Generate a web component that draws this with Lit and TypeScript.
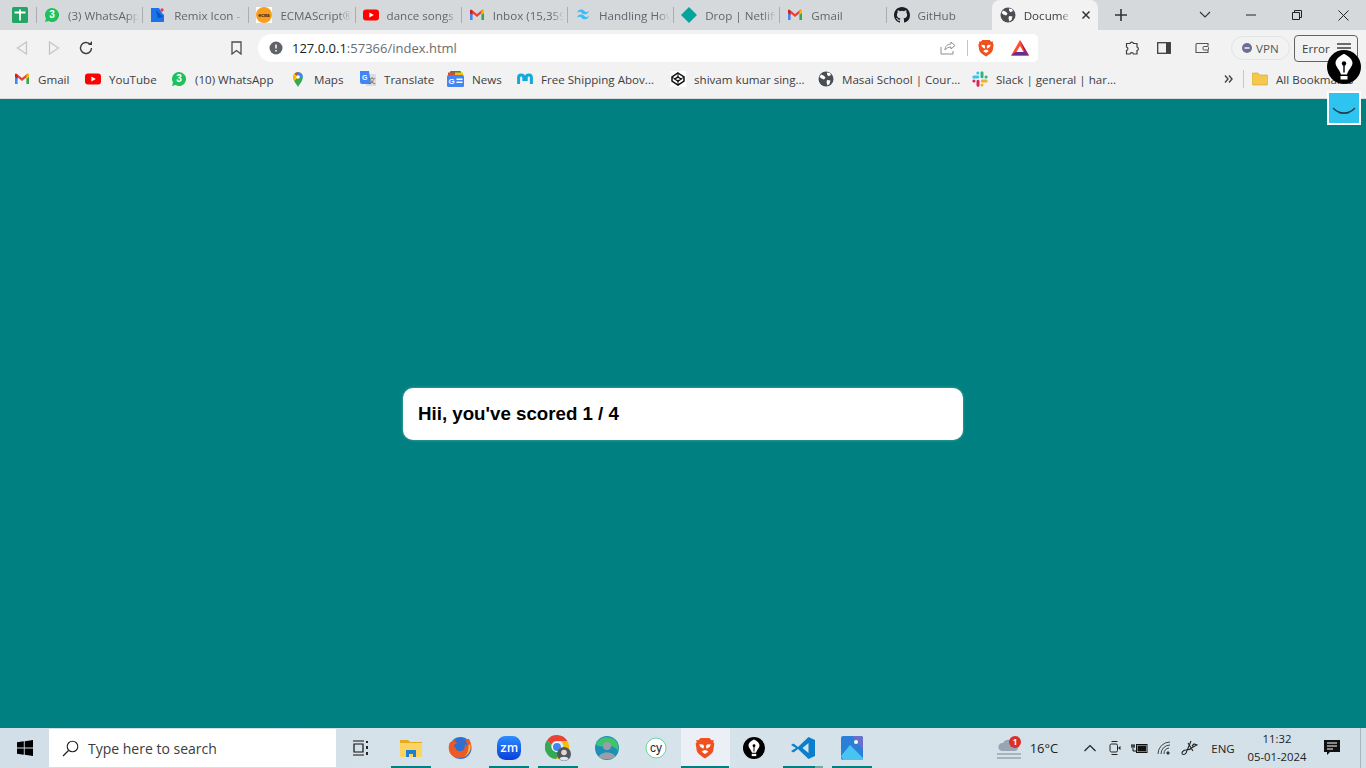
import { LitElement, html, css } from "lit";
import { customElement } from "lit/decorators.js";

// iconos de favicon
const gmail = (s = 16) => html`<svg width=${s} height=${s} viewBox="0 0 16 16">
  <path d="M1 4v9h2.600V7z" fill="#4285f4"/><path d="M15 4v9h-2.600V7z" fill="#34a853"/>
  <path d="M1 4.200 2.400 2.600 8 7l5.600-4.400L15 4.200 8 10z" fill="#ea4335"/>
  <path d="M12.400 4 15 2.600V6l-2.600 2z" fill="#fbbc04"/><path d="M3.600 4 1 2.600V6l2.600 2z" fill="#c5221f"/>
</svg>`;
const youtube = html`<svg width="16" height="16" viewBox="0 0 16 16"><rect y="2.500" width="16" height="11" rx="3" fill="#f00"/><path d="M6.400 5.500 10.800 8l-4.400 2.500z" fill="#fff"/></svg>`;
const whatsapp = html`<svg width="16" height="16" viewBox="0 0 16 16">
  <path d="M8 1a7 7 0 1 1-3.400 13.100L1 15l1-3.400A7 7 0 0 1 8 1z" fill="#1fc15c"/>
  <text x="8" y="11.400" font-size="10" font-weight="700" text-anchor="middle" fill="#fff" font-family="Liberation Sans">3</text>
</svg>`;
const remix = html`<svg width="16" height="16" viewBox="0 0 16 16"><path d="M1 1h8l3 5 2 2v7H1z" fill="#1a73e8"/><path d="M6 3l7 7-5 1z" fill="#0b4fc4"/><circle cx="12" cy="3" r="1.700" fill="#f0386b"/></svg>`;
const ecma = html`<svg width="16" height="16" viewBox="0 0 16 16"><rect width="16" height="16" fill="#fff"/><circle cx="8" cy="8" r="8" fill="#f99d1c"/><text x="8" y="10" font-size="4.800" font-weight="700" text-anchor="middle" fill="#222" font-family="Liberation Mono">ecma</text></svg>`;
const tailwind = html`<svg width="16" height="16" viewBox="0 0 16 16"><path d="M4 7c.6-2.400 2-3.500 4-3.500 3 0 3.400 2.200 5 2.600 1 .2 2-.2 3-1.300-.6 2.400-2 3.500-4 3.500-3 0-3.400-2.200-5-2.600-1-.2-2 .2-3 1.300z" fill="#38bdf8" transform="translate(-2 -1)"/><path d="M4 7c.6-2.400 2-3.500 4-3.500 3 0 3.400 2.200 5 2.600 1 .2 2-.2 3-1.300-.6 2.400-2 3.500-4 3.500-3 0-3.400-2.200-5-2.600-1-.2-2 .2-3 1.300z" fill="#38bdf8" transform="translate(-2 4)"/></svg>`;
const netlify = html`<svg width="16" height="16" viewBox="0 0 16 16"><path d="M8 0l8 8-8 8-8-8z" fill="#05a59d"/></svg>`;
const github = html`<svg width="16" height="16" viewBox="0 0 16 16"><path fill="#1b1f23" d="M8 0C3.580 0 0 3.580 0 8c0 3.540 2.290 6.530 5.470 7.590.4.070.55-.17.55-.38 0-.19-.01-.82-.01-1.490-2.010.37-2.530-.49-2.690-.94-.09-.23-.48-.94-.82-1.130-.28-.15-.68-.52-.01-.53.63-.01 1.080.58 1.230.82.720 1.210 1.870.87 2.330.66.070-.52.280-.87.510-1.070-1.780-.2-3.640-.89-3.640-3.950 0-.87.310-1.590.820-2.150-.08-.2-.36-1.020.08-2.120 0 0 .67-.21 2.200.820a7.400 7.400 0 0 1 4 0c1.530-1.040 2.200-.82 2.200-.82.440 1.100.16 1.920.080 2.120.51.560.820 1.270.820 2.150 0 3.070-1.870 3.750-3.650 3.950.29.250.54.730.54 1.480 0 1.070-.01 1.930-.01 2.200 0 .21.150.46.550.38A8.010 8.010 0 0 0 16 8c0-4.420-3.580-8-8-8z"/></svg>`;
const globe = html`<svg width="16" height="16" viewBox="0 0 16 16"><circle cx="8" cy="8" r="7.500" fill="#4a4d51"/><path d="M3 3.500l3 1.200 1.500 2L6 8.500 3.500 7.500 1.500 6zM9 1.500l3 .5 1 2-2.500 1.200L9 3.500zM9 9l3.500.5-1 3.500-2 1.500-1-3z" fill="#fff"/></svg>`;
const maps = html`<svg width="16" height="16" viewBox="0 0 16 16"><path d="M8 16c-1-2.500-4.800-5.500-4.800-10a4.800 4.800 0 0 1 9.600 0C12.800 10.500 9 13.500 8 16z" fill="#34a853"/><path d="M3.200 6a4.800 4.800 0 0 1 1.400-3.400L8 6l-3.400 4A8 8 0 0 1 3.200 6z" fill="#fbbc04"/><path d="M4.600 2.600A4.800 4.800 0 0 1 8 1.200V6z" fill="#ea4335"/><path d="M8 1.200a4.800 4.800 0 0 1 4.800 4.800H8z" fill="#4285f4"/><circle cx="8" cy="6" r="1.800" fill="#fff"/></svg>`;
const translate = html`<svg width="16" height="16" viewBox="0 0 16 16"><rect x="6" y="3" width="10" height="12" fill="#ddd"/><path d="M0 0h9l2 13H2a2 2 0 0 1-2-2z" fill="#4285f4"/><text x="4.800" y="8.500" font-size="7" font-weight="700" text-anchor="middle" fill="#fff" font-family="Liberation Sans">G</text><text x="12" y="12" font-size="7" text-anchor="middle" fill="#666" font-family="Noto Sans CJK SC">文</text></svg>`;
const news = html`<svg width="17" height="16" viewBox="0 0 17 16"><rect x="3" y="0" width="11" height="6" rx="1" fill="#0f9d58"/><rect x="1" y="1.500" width="9" height="5" fill="#ea4335"/><rect x="8" y="1.500" width="8" height="5" fill="#fbbc04"/><rect y="4" width="17" height="12" rx="1.500" fill="#4285f4"/><text x="4.600" y="13" font-size="8" font-weight="700" text-anchor="middle" fill="#fff" font-family="Liberation Sans">G</text><path d="M9.500 7.500h6v1.500h-6zM9.500 10.500h6v1.500h-6z" fill="#fff"/></svg>`;
const myntra = html`<svg width="16" height="16" viewBox="0 0 16 16"><path d="M1.600 13V6.500a2.600 2.600 0 0 1 5.200 0V10M9.200 10V6.500a2.600 2.600 0 0 1 5.200 0V13" fill="none" stroke="#13a9dc" stroke-width="3"/></svg>`;
const codepen = html`<svg width="16" height="16" viewBox="0 0 16 16"><rect width="16" height="16" fill="#fff"/><path d="M8 2l6 4v4l-6 4-6-4V6zM8 6l3 2-3 2-3-2z" fill="none" stroke="#111" stroke-width="1.500"/><path d="M8 2v4M8 10v4M2 6l3 2M14 6l-3 2" stroke="#111"/></svg>`;
const slack = html`<svg width="16" height="16" viewBox="0 0 16 16" fill="none" stroke-width="3" stroke-linecap="round"><path d="M1.800 6h4M5.800 2v.1" stroke="#36c5f0"/><path d="M10 1.800v4M14 6h.1" stroke="#2eb67d"/><path d="M14.200 10h-4M10 14v.1" stroke="#ecb22e"/><path d="M6 14.200v-4M2 10h-.1" stroke="#e01e5a"/></svg>`;
const folder = html`<svg width="16" height="16" viewBox="0 0 16 16"><path d="M0 3a1 1 0 0 1 1-1h5l1.500 2H15a1 1 0 0 1 1 1v8a1 1 0 0 1-1 1H1a1 1 0 0 1-1-1z" fill="#f5c84c" stroke="#c9a13a" stroke-width=".6"/></svg>`;
const braveLogo = (s = 18) => html`<svg width=${s} height=${s} viewBox="0 0 18 20"><path d="M5 1h8l2 2 2-.3-.5 2L17.500 6l-1 6.500c-.6 2.500-5 5.500-7.500 7-2.500-1.500-6.900-4.500-7.500-7L.5 6l1-1.300-.5-2L3 3z" fill="#f1501f"/><path d="M9 15.500 6 13.500l1-1 2-.7 2 .7 1 1zM3.800 6.500l3.400.3 1 1.700-.8 2.200-3-2zM14.200 6.500l-3.400.3-1 1.700.8 2.200 3-2z" fill="#fff"/></svg>`;
// plumilla: cuerpo blanco que se estrecha, agujero pequeño con ranura, base separada abajo
const penLogo = (s: number) => html`<svg width=${s} height=${s} viewBox="0 0 34 34"><circle cx="17" cy="17" r="17" fill="#000"/><path d="M17 4c-2 .6-8.500 4.500-8.500 9 0 3.500 4 6.500 5.500 11.500h6c1.500-5 5.500-8 5.500-11.500 0-4.500-6.500-8.400-8.500-9z" fill="#fff"/><rect x="13.500" y="26" width="7" height="3.500" fill="#fff"/><circle cx="17" cy="13.500" r="2.200" fill="#000"/><rect x="16.300" y="14.500" width="1.400" height="8" fill="#000"/></svg>`;

const tabs = [
  { icon: whatsapp, title: "(3) WhatsApp" },
  { icon: remix, title: "Remix Icon - Simply" },
  { icon: ecma, title: "ECMAScript®" },
  { icon: youtube, title: "dance songs - YouTube" },
  { icon: gmail(), title: "Inbox (15,359)" },
  { icon: tailwind, title: "Handling Hover" },
  { icon: netlify, title: "Drop | Netlify" },
  { icon: gmail(), title: "Gmail" },
  { icon: github, title: "GitHub" },
];

const bookmarks = [
  { icon: gmail(), label: "Gmail", w: 71 },
  { icon: youtube, label: "YouTube", w: 86 },
  { icon: whatsapp, label: "(10) WhatsApp", w: 119 },
  { icon: maps, label: "Maps", w: 70 },
  { icon: translate, label: "Translate", w: 87 },
  { icon: news, label: "News", w: 70 },
  { icon: myntra, label: "Free Shipping Abov...", w: 153 },
  { icon: codepen, label: "shivam kumar sing...", w: 148 },
  { icon: globe, label: "Masai School | Cour...", w: 154 },
  { icon: slack, label: "Slack | general | har...", w: 150 },
];

// apps de la barra de tareas
const apps = [
  { cls: "open", icon: html`<svg width="22" height="20" viewBox="0 0 22 20"><path d="M0 2h8l2 2h12v3H0z" fill="#e8a91e"/><path d="M0 5h22v14H0z" fill="#fcd462"/><path d="M6 12h10v7h-3v-3H9v3H6z" fill="#1d7fd1"/></svg>` },
  { cls: "", icon: html`<svg width="24" height="24" viewBox="0 0 24 24"><circle cx="12.500" cy="12" r="11" fill="#2f6fd0"/><path d="M21 3c2.500 4 3 9 .5 13-3 5.500-10 7.500-15 5C2 19 0 14 1 9c.3-1.500 1-3 1.500-3.500 0 1 .3 1.700.7 2.200C4 5 6 3.500 8 3c-1 1-1.500 2-1.500 2.500 1 .2 2 .8 2.500 1.500-1 1-3 1.500-3 2.500 0 1 1 1.500 1.500 2.500.5 2.500 3.500 4 6 3 3-1 4-4 3-7 1 .5 2 1.500 2.500 2.500.5-2.500-.5-5-2-7.500z" fill="#ee5a24"/><path d="M22 8c1 3 .5 6-1 8.500-1.500 2-3 3.500-5 4.500 3-2.500 5-6 4.500-11z" fill="#fcc33c"/></svg>` },
  { cls: "open", icon: html`<svg width="24" height="24" viewBox="0 0 24 24"><defs><linearGradient id="zm" x1="0" y1="0" x2="0" y2="1"><stop offset="0" stop-color="#2d8cff"/><stop offset="1" stop-color="#0b3fd9"/></linearGradient></defs><rect width="24" height="24" rx="8.500" fill="url(#zm)"/><text x="12" y="16" font-size="12.500" font-weight="500" text-anchor="middle" fill="#fff" font-family="Inter">zm</text></svg>` },
  { cls: "open", icon: html`<svg width="26" height="26" viewBox="0 0 26 26"><path d="M12 0a12 12 0 0 1 10.400 6H12a6 6 0 0 0-5.700 4L2 5.200A12 12 0 0 1 12 0z" fill="#ea4335"/><path d="M22.400 6A12 12 0 0 1 11 24l5.200-8.500A6 6 0 0 0 16 6z" fill="#fbbc04"/><path d="M2 5.200A12 12 0 0 0 11 24l5.200-8.500a6 6 0 0 1-9.900-5.500z" fill="#34a853"/><circle cx="12" cy="12" r="5" fill="#fff"/><circle cx="12" cy="12" r="4" fill="#4285f4"/><circle cx="19" cy="19" r="7" fill="#4e5a63"/><circle cx="19" cy="17.500" r="2.800" fill="#e7d5c6"/><path d="M14.500 24c.5-3 8.500-3 9 0a7 7 0 0 1-9 0z" fill="#dfe6ec"/></svg>` },
  { cls: "", icon: html`<svg width="24" height="24" viewBox="0 0 24 24"><circle cx="12" cy="12" r="12" fill="#1b8fb8"/><path d="M1 8c3-7 13-9 19-4 3 3 4 7 3 11-2-4-8-6-12-5-4 .5-8 1-10-2z" fill="#3ec46d"/><circle cx="12" cy="10" r="4" fill="#9b9fa3"/><path d="M4 21c1-6 15-6 16 0-4 3-12 3-16 0z" fill="#9b9fa3"/></svg>` },
  { cls: "", icon: html`<svg width="22" height="22" viewBox="0 0 22 22"><circle cx="11" cy="11" r="10" fill="#fff" stroke="#69d3a7" stroke-width="1"/><text x="11" y="15" font-size="12" text-anchor="middle" fill="#1b1e2e" font-family="Liberation Sans">cy</text></svg>` },
  { cls: "active", icon: braveLogo(22) },
  { cls: "", icon: penLogo(22) },
  { cls: "open tail", icon: html`<svg width="24" height="24" viewBox="0 0 24 24"><path d="M17.500 1 24 4v16l-6.500 3L7 13l-4.500 3.500L0 15l5-3-5-3 2.500-1.500L7 11zM17.500 7l-6 5 6 5z" fill="#0b7fcc"/></svg>` },
  { cls: "open", icon: html`<svg width="22" height="24" viewBox="0 0 22 24"><rect width="22" height="24" rx="2" fill="#2a7fd8"/><path d="M11 0h9a2 2 0 0 1 2 2v12z" fill="#6a6fc9"/><circle cx="15" cy="6" r="2" fill="#fff"/><path d="M0 20 9 9l13 13v2H2z" fill="#49c3f2"/></svg>` },
];

@customElement("app-root")
export class AppRoot extends LitElement {
  static styles = css`
    :host {
      display: flex;
      flex-direction: column;
      position: relative;
      width: 1366px;
      height: 768px;
      overflow: hidden;
      font-family: "Open Sans", "Liberation Sans", sans-serif;
      font-size: 11.6px;
      color: #3c4043;
    }
    svg {
      display: block;
      flex: none;
    }

    /* pestañas */
    .tabstrip {
      display: flex;
      height: 30px;
      background: #d5d9dc;
    }
    .pinned {
      width: 36px;
      flex: none;
      display: flex;
      align-items: center;
      padding-left: 12px;
      box-sizing: border-box;
    }
    .tab {
      width: 106.2px;
      flex: none;
      display: flex;
      align-items: center;
      gap: 8px;
      padding-left: 8px;
      box-sizing: border-box;
      position: relative;
      color: #62666a;
      white-space: nowrap;
      overflow: hidden;
    }
    .tab::before {
      content: "";
      position: absolute;
      left: 0;
      top: 7px;
      bottom: 7px;
      width: 1px;
      background: #a9adb0;
    }
    .tab span {
      flex: 1;
      min-width: 0;
      overflow: hidden;
      margin-right: 3px;
      -webkit-mask-image: linear-gradient(90deg, #000 82%, transparent);
      mask-image: linear-gradient(90deg, #000 82%, transparent);
    }
    .tab.current {
      background: #f2f2f2;
      border-radius: 8px 8px 0 0;
      color: #3c4043;
      margin-right: 5px;
    }
    .tab.current::before {
      display: none;
    }
    .tab.current span {
      margin-right: 0;
    }
    .tab.current .x {
      width: 24px;
      flex: none;
      display: flex;
      justify-content: center;
      margin-left: -4px;
    }
    .strip-btn {
      flex: none;
      display: flex;
      align-items: center;
      justify-content: center;
      height: 30px;
    }
    .w-36 { width: 36px; }
    .w-46 { width: 46px; }
    .spacer { flex: 1; }

    /* barra de herramientas */
    .toolbar {
      display: flex;
      align-items: center;
      height: 36px;
      padding-left: 6px;
      background: #f2f2f2;
    }
    .tool {
      width: 32px;
      flex: none;
      display: flex;
      align-items: center;
      justify-content: center;
    }
    .tool.bookmark { margin-left: 118px; }
    .tool.ext { margin-left: 78px; }
    .tool.wallet { margin-left: 6px; }
    .omnibox {
      width: 780px;
      height: 28px;
      margin-left: 6px;
      flex: none;
      display: flex;
      align-items: center;
      background: #fff;
      border-radius: 14px 5px 5px 14px;
      box-sizing: border-box;
      padding-left: 11px;
      font-size: 13px;
    }
    .url {
      margin-left: 9px;
      flex: 1;
      color: #6a6d70;
    }
    .url b {
      font-weight: 400;
      color: #202124;
    }
    .divider {
      width: 1px;
      height: 16px;
      background: #c4c6c9;
      margin: 0 9px 0 11px;
    }
    .omni-end {
      display: flex;
      align-items: center;
      padding-right: 9px;
    }
    .omni-end .bat { margin-left: 16px; }
    .vpn {
      width: 59px;
      height: 24px;
      margin-left: 13px;
      flex: none;
      box-sizing: border-box;
      border: 1px solid #e2e3e5;
      border-radius: 12px;
      display: flex;
      align-items: center;
      gap: 4px;
      padding-left: 10px;
      color: #55585c;
    }
    .error {
      width: 64px;
      height: 27px;
      margin-left: 4px;
      flex: none;
      box-sizing: border-box;
      border: 1px solid #5f6368;
      border-radius: 4px;
      display: flex;
      align-items: center;
      justify-content: space-between;
      padding: 0 6px 0 7px;
      color: #3c4043;
    }

    /* marcadores */
    .bookmarks {
      display: flex;
      align-items: center;
      height: 33px;
      box-sizing: border-box;
      padding: 0 0 6px 14px;
      background: #f2f2f2;
      border-bottom: 1px solid #d9dbdd;
      white-space: nowrap;
    }
    .bm {
      flex: none;
      display: flex;
      align-items: center;
      gap: 8px;
      color: #3c4043;
    }
    .more {
      margin-left: auto;
      width: 22px;
      display: flex;
      justify-content: center;
    }
    .bm-sep {
      width: 1px;
      height: 18px;
      background: #c4c6c9;
      margin: 0 8px 0 4px;
    }
    .all {
      width: 114px;
      flex: none;
      overflow: hidden;
    }

    /* página */
    .page {
      flex: 1;
      min-height: 0;
      display: flex;
      align-items: center;
      justify-content: center;
      background: #008080;
    }
    .card {
      width: 560px;
      height: 52px;
      box-sizing: border-box;
      display: flex;
      align-items: center;
      padding-left: 15px;
      background: #fff;
      border-radius: 10px;
      box-shadow: 0 0 3px rgba(255, 255, 255, 0.35);
      font-family: "Liberation Sans", Arial, sans-serif;
      font-size: 18.72px;
      font-weight: 700;
      color: #000;
    }

    /* barra de tareas */
    .taskbar {
      display: flex;
      align-items: center;
      height: 40px;
      flex: none;
      background: linear-gradient(90deg, #d3dfe8, #d6e3ea 50%, #d3e0e8);
    }
    .start {
      width: 49px;
      flex: none;
      display: flex;
      justify-content: center;
    }
    .search {
      width: 287px;
      height: 38px;
      flex: none;
      box-sizing: border-box;
      padding-left: 13px;
      background: #fff;
      display: flex;
      align-items: center;
      gap: 9px;
      font-size: 14px;
      color: #3a3d40;
    }
    .taskview {
      width: 51px;
      padding-right: 2px;
      box-sizing: border-box;
      flex: none;
      display: flex;
      justify-content: center;
    }
    .app {
      width: 49px;
      height: 40px;
      padding-right: 2px;
      flex: none;
      display: flex;
      align-items: center;
      justify-content: center;
      position: relative;
      box-sizing: border-box;
    }
    .app.open::after {
      content: "";
      position: absolute;
      left: 4px;
      right: 5px;
      bottom: 0;
      height: 2px;
      background: #008080;
    }
    .app.tail::after {
      background: linear-gradient(90deg, #008080 80%, #6fa9aa 80%);
    }
    .app.active {
      background: #eaf0f5;
    }
    .app.active::after {
      content: "";
      position: absolute;
      left: 0;
      right: 1px;
      bottom: 0;
      height: 2px;
      background: #008080;
    }
    .tray {
      margin-left: auto;
      display: flex;
      align-items: center;
      height: 40px;
      border-right: 1px solid #a9b4bc;
      margin-right: 5px;
      color: #222;
    }
    .tray-item {
      flex: none;
      display: flex;
      align-items: center;
      justify-content: center;
      height: 40px;
      box-sizing: border-box;
    }
    .weather {
      width: 90px;
      padding-right: 9px;
      gap: 9px;
      font-size: 13px;
      position: relative;
    }
    .badge {
      position: absolute;
      left: 22px;
      top: 8px;
      width: 12px;
      height: 12px;
      border-radius: 50%;
      background: #d9302a;
      color: #fff;
      font-size: 8px;
      font-weight: 700;
      line-height: 12px;
      text-align: center;
    }
    .t-25 { width: 25px; }
    .eng { width: 42px; font-size: 11.5px; }
    .clock {
      width: 66px;
      flex-direction: column;
      line-height: 18px;
      font-size: 11.3px;
    }
    .notif { width: 50px; padding-right: 6px; }

    /* extensiones flotantes encima del navegador */
    .float-pen {
      position: absolute;
      right: 5px;
      top: 50px;
    }
    .float-smile {
      position: absolute;
      right: 5px;
      top: 91px;
      width: 34px;
      height: 34px;
      box-sizing: border-box;
      border: 2px solid #fff;
      background: #2fc4ef;
    }
  `;

  render() {
    return html`
      <div class="tabstrip">
        <div class="pinned">
          <svg width="16" height="16" viewBox="0 0 16 16"><rect width="16" height="16" rx="1.500" fill="#23a566"/><path d="M2.500 5.500h11M8 2.500v11" stroke="#fff" stroke-width="1.800"/></svg>
        </div>
        ${tabs.map((t) => html`<div class="tab">${t.icon}<span>${t.title}</span></div>`)}
        <div class="tab current">
          ${globe}<span>Document</span>
          <div class="x">
            <svg width="10" height="10" viewBox="0 0 10 10"><path d="M1.500 1.500l7 7M8.500 1.500l-7 7" stroke="#333" stroke-width="1.500"/></svg>
          </div>
        </div>
        <div class="strip-btn w-36">
          <svg width="12" height="12" viewBox="0 0 12 12"><path d="M6 0v12M0 6h12" stroke="#333" stroke-width="1.600"/></svg>
        </div>
        <div class="spacer"></div>
        <div class="strip-btn w-46">
          <svg width="12" height="8" viewBox="0 0 12 8"><path d="M1 1l5 5 5-5" fill="none" stroke="#333" stroke-width="1.100"/></svg>
        </div>
        <div class="strip-btn w-46">
          <svg width="10" height="2" viewBox="0 0 10 2"><path d="M0 1h10" stroke="#222"/></svg>
        </div>
        <div class="strip-btn w-46">
          <svg width="10" height="10" viewBox="0 0 10 10"><path d="M.5 2.500h7v7h-7zM2.500 2.500v-2h7v7h-2" fill="none" stroke="#222"/></svg>
        </div>
        <div class="strip-btn w-46">
          <svg width="11" height="11" viewBox="0 0 11 11"><path d="M.5.5l10 10M10.500.5l-10 10" stroke="#222"/></svg>
        </div>
      </div>

      <div class="toolbar">
        <div class="tool">
          <svg width="12" height="14" viewBox="0 0 12 14"><path d="M10.500 1v12L1.500 7z" fill="none" stroke="#c3c5c8" stroke-width="1.300"/></svg>
        </div>
        <div class="tool">
          <svg width="12" height="14" viewBox="0 0 12 14"><path d="M1.500 1v12l9-6z" fill="none" stroke="#c3c5c8" stroke-width="1.300"/></svg>
        </div>
        <div class="tool">
          <svg width="14" height="14" viewBox="0 0 14 14"><path d="M12.500 7A5.500 5.500 0 1 1 10.800 3" fill="none" stroke="#3c4043" stroke-width="1.400"/><path d="M9 4h4V0z" fill="#3c4043"/></svg>
        </div>
        <div class="tool bookmark">
          <svg width="11" height="14" viewBox="0 0 11 14"><path d="M1 1h9v12L5.500 9.500 1 13z" fill="none" stroke="#4a4d51" stroke-width="1.300"/></svg>
        </div>
        <div class="omnibox">
          <svg width="14" height="14" viewBox="0 0 14 14"><circle cx="7" cy="7" r="6.500" fill="#5f6368"/><path d="M7 3.500v4M7 9v1.500" stroke="#fff" stroke-width="1.500"/></svg>
          <div class="url"><b>127.0.0.1</b>:57366/index.html</div>
          <div class="omni-end">
            <svg width="16" height="14" viewBox="0 0 16 14"><path d="M1 6v7h12v-3M5 9c0-4 3-6 6-6V1l4 3.500L11 8V6c-2.500 0-4.500 1-6 3z" fill="none" stroke="#8b8e91" stroke-width="1"/></svg>
            <div class="divider"></div>
            ${braveLogo(18)}
            <svg class="bat" width="18" height="16" viewBox="0 0 18 16"><path d="M9 0 0 15.500h18z" fill="#ff4f2b"/><path d="M9 0l9 15.500-4.500-3.500z" fill="#9e1f63"/><path d="M0 15.500h18l-4.500-3.500h-9z" fill="#662d91"/><path d="M9 6l3.500 6h-7z" fill="#fff"/></svg>
          </div>
        </div>
        <div class="tool ext">
          <svg width="15" height="15" viewBox="0 0 15 15"><path d="M5 2.500a1.800 1.800 0 0 1 3.500 0H12v3.500a1.800 1.800 0 0 1 0 3.500V13H8.500a1.800 1.800 0 0 0-3.500 0H1.500V9.500a1.800 1.800 0 0 0 0-3.500V2.500z" fill="none" stroke="#3c4043" stroke-width="1.200"/></svg>
        </div>
        <div class="tool">
          <svg width="14" height="12" viewBox="0 0 14 12"><rect x=".7" y=".7" width="12.600" height="10.600" fill="none" stroke="#3c4043" stroke-width="1.300"/><rect x="9" y="1" width="4" height="10" fill="#3c4043"/></svg>
        </div>
        <div class="tool wallet">
          <svg width="14" height="12" viewBox="0 0 14 12"><path d="M13 4V1.500H2A1.200 1.200 0 0 0 1 3v7.500h12V8" fill="none" stroke="#555" stroke-width="1.100"/><rect x="8" y="4.500" width="5.500" height="3.500" rx="1" fill="none" stroke="#555"/></svg>
        </div>
        <div class="vpn">
          <svg width="10" height="10" viewBox="0 0 10 10"><circle cx="5" cy="5" r="5" fill="#6b6f93"/><path d="M2.500 5h5" stroke="#fff" stroke-width="1.400"/></svg>
          VPN
        </div>
        <div class="error">
          Error
          <svg width="14" height="10" viewBox="0 0 14 10"><path d="M0 1h14M0 5h14M0 9h14" stroke="#3c4043" stroke-width="1.400"/></svg>
        </div>
      </div>

      <div class="bookmarks">
        ${bookmarks.map((b) => html`<div class="bm" style="width:${b.w}px">${b.icon}${b.label}</div>`)}
        <div class="more">
          <svg width="9" height="8" viewBox="0 0 9 8"><path d="M1 .5 4 4 1 7.500M5 .5 8 4 5 7.500" fill="none" stroke="#444" stroke-width="1.400"/></svg>
        </div>
        <div class="bm-sep"></div>
        <div class="bm all">${folder}All Bookmarks</div>
      </div>

      <div class="page">
        <div class="card">Hii, you've scored 1 / 4</div>
      </div>

      <div class="taskbar">
        <div class="start">
          <svg width="16" height="16" viewBox="0 0 16 16"><path d="M0 2.300 6.800 1.300v6.200H0zM7.700 1.200 16 0v7.500H7.700zM0 8.500h6.800v6.200L0 13.700zM7.700 8.500H16V16l-8.300-1.200z" fill="#000"/></svg>
        </div>
        <div class="search">
          <svg width="17" height="17" viewBox="0 0 17 17"><circle cx="10.500" cy="6.500" r="5.300" fill="none" stroke="#222" stroke-width="1.100"/><path d="M6.500 10.500 1 16" stroke="#222" stroke-width="1.300"/></svg>
          Type here to search
        </div>
        <div class="taskview">
          <svg width="17" height="16" viewBox="0 0 17 16"><path d="M1 1h11M1 15h11M2 4h9v8H2z" fill="none" stroke="#111" stroke-width="1.200"/><path d="M15 1v2M15 6v3M15 12v3" stroke="#111" stroke-width="1.800"/></svg>
        </div>
        ${apps.map((a) => html`<div class="app ${a.cls}">${a.icon}</div>`)}
        <div class="tray">
          <div class="tray-item weather">
            <svg width="24" height="24" viewBox="0 0 24 24"><path d="M5 15a4 4 0 0 1 1-8 6 6 0 0 1 11 1 3.500 3.500 0 0 1 1 7z" fill="#9aa5b4"/><path d="M0 18h24M0 22h24" stroke="#a9b3c0" stroke-width="1.800"/></svg>
            <span class="badge">1</span>
            16°C
          </div>
          <div class="tray-item t-25">
            <svg width="12" height="8" viewBox="0 0 12 8"><path d="M.5 7 6 1.500 11.500 7" fill="none" stroke="#222" stroke-width="1.200"/></svg>
          </div>
          <div class="tray-item t-25">
            <svg width="12" height="16" viewBox="0 0 12 16"><path d="M2.500 1.500h6M2.500 14.500h6" stroke="#222"/><rect x="1" y="4" width="7.500" height="8" rx="1.500" fill="none" stroke="#222"/><path d="M9 8l2.500-2v4z" fill="#222"/></svg>
          </div>
          <div class="tray-item t-25">
            <svg width="17" height="11" viewBox="0 0 17 11"><path d="M0 3h4M1 1v4M3 1v4M2 5v3h3" fill="none" stroke="#111"/><rect x="5.500" y="1.500" width="10.500" height="8" fill="none" stroke="#111"/><rect x="6.500" y="2.500" width="8.500" height="6" fill="#111"/></svg>
          </div>
          <div class="tray-item t-25">
            <svg width="15" height="14" viewBox="0 0 15 14" fill="none" stroke="#333" stroke-width=".9"><path d="M1 13A12 12 0 0 1 13 1M4 13a9 9 0 0 1 9-9M7 13a6 6 0 0 1 5-6"/><circle cx="11" cy="12" r="1.200" fill="#333"/></svg>
          </div>
          <div class="tray-item t-25">
            <svg width="17" height="16" viewBox="0 0 17 16" fill="none" stroke="#222" stroke-width="1.100"><path d="M10 1 5 13c-1 2-4 2-4 0 0-1.500 2-3 4-3 3 0 5-1 7-3l4-2-3-1-2 2M7 3l5 8"/></svg>
          </div>
          <div class="tray-item eng">ENG</div>
          <div class="tray-item clock"><div>11:32</div><div>05-01-2024</div></div>
          <div class="tray-item notif">
            <svg width="16" height="16" viewBox="0 0 16 16"><path d="M0 0h16v12H6l-3 3v-3H0z" fill="#111"/><path d="M3 3h10M3 6h10M3 9h6" stroke="#fff"/></svg>
          </div>
        </div>
      </div>

      <div class="float-pen">${penLogo(34)}</div>
      <div class="float-smile">
        <svg width="30" height="30" viewBox="0 0 30 30" fill="none" stroke="#1c3b4a"><path d="M4 15c6 6.500 16 6.500 22 0" stroke-width="1.200"/><path d="M9 19.500c4 1.500 8 1.500 12 0" stroke-width=".8"/></svg>
      </div>
    `;
  }
}
